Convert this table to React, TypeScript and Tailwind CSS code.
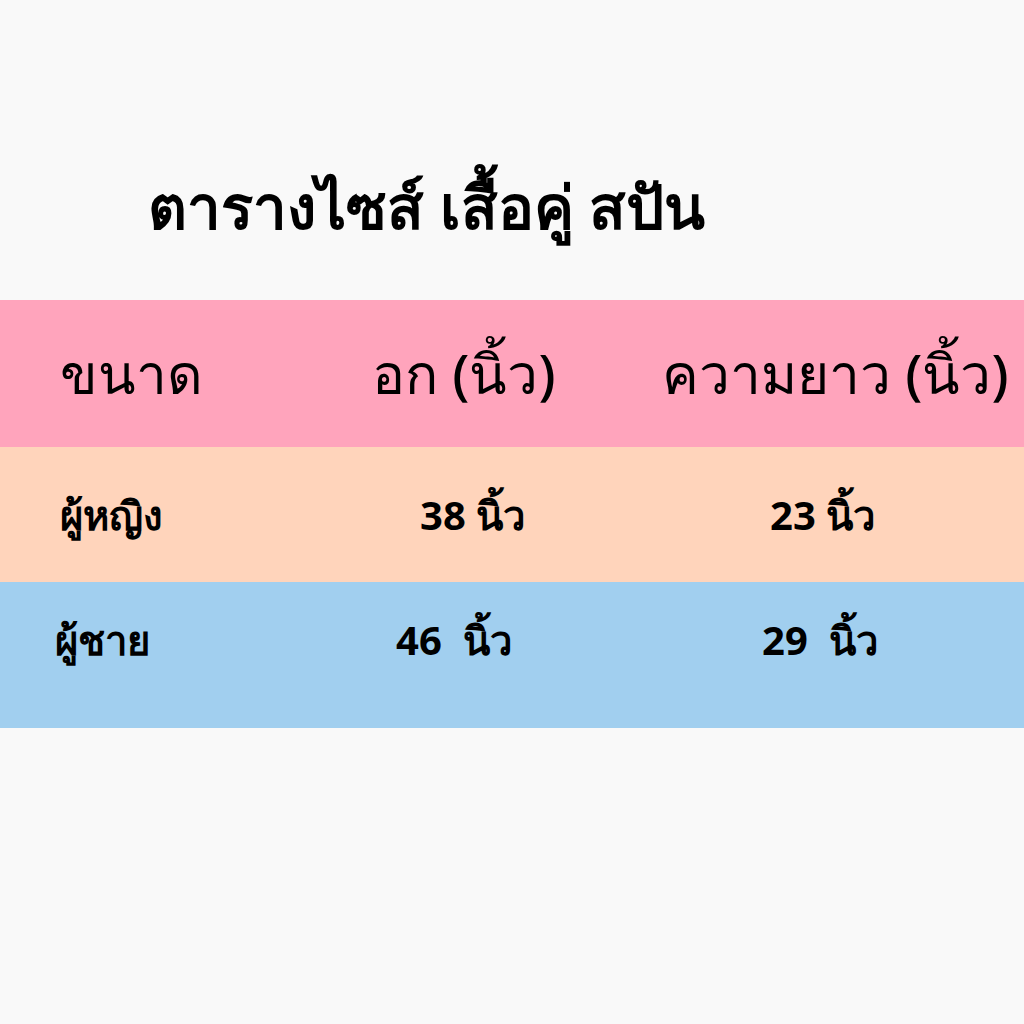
export default function App() {
  return (
    <div className="w-[1024px] h-[1024px] bg-[#f9f9f9] text-black font-['Noto_Sans','DejaVu_Sans',sans-serif]">
      <div className="h-[300px] pt-[170px] pl-[148px]">
        <h1 className="text-[60px] leading-[72px] font-bold">ตารางไซส์ เสื้อคู่ สปัน</h1>
      </div>
      <div className="h-[147px] bg-[#ffa4bc] flex items-center text-[55px] font-medium">
        <div className="w-[300px] pl-[60px]">ขนาด</div>
        <div className="w-[340px] pl-[72px]">อก (นิ้ว)</div>
        <div className="flex-1 pl-[22px] whitespace-nowrap">ความยาว (นิ้ว)</div>
      </div>
      <div className="h-[135px] bg-[#ffd4bb] flex items-center text-[40px] font-bold">
        <div className="w-[300px] pl-[60px]">ผู้หญิง</div>
        <div className="w-[340px] pl-[120px]">38 นิ้ว</div>
        <div className="flex-1 pl-[130px]">23 นิ้ว</div>
      </div>
      <div className="h-[146px] bg-[#a1cfef] flex items-start pt-[28px] text-[40px] font-bold">
        <div className="w-[300px] pl-[55px]">ผู้ชาย</div>
        <div className="w-[340px] pl-[96px] whitespace-pre">46  นิ้ว</div>
        <div className="flex-1 pl-[122px] whitespace-pre">29  นิ้ว</div>
      </div>
    </div>
  );
}
